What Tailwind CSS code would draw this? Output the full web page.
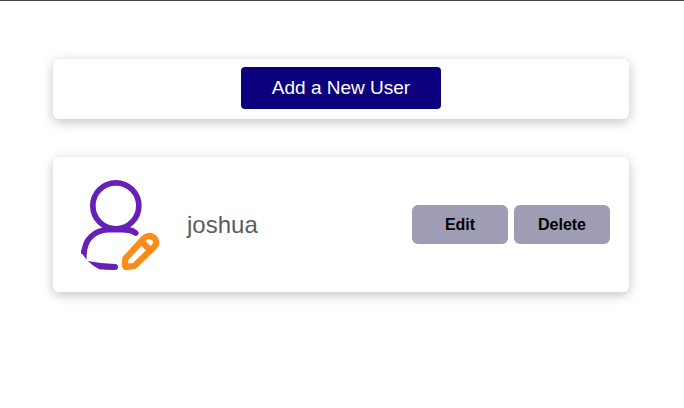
<!DOCTYPE html>
<html lang="en">
<head>
<meta charset="utf-8">
<meta name="viewport" content="width=device-width, initial-scale=1">
<title>Users</title>
<script src="https://cdn.jsdelivr.net/npm/@tailwindcss/browser@4"></script>
</head>
<body class="min-h-screen border-t border-[#444444] bg-white font-['Liberation_Sans',Arial,sans-serif]">
<main class="flex flex-col gap-[38px] pt-[58px] pr-[55px] pb-8 pl-[53px]">
  <section class="flex justify-center rounded-md bg-white pt-2 pb-2.5 shadow-[0_3px_12px_rgba(0,0,0,0.24)]">
    <button type="button" class="h-[42px] w-[200px] rounded bg-[#0b007e] text-[19px] text-white">Add a New User</button>
  </section>
  <article class="flex items-center rounded-md bg-white py-[22px] pr-[19px] pl-[27px] shadow-[0_3px_12px_rgba(0,0,0,0.24)]">
    <svg class="h-[91px] w-20 shrink-0" viewBox="30 27 240 273" fill="none" stroke-linecap="round" stroke-linejoin="round" aria-hidden="true">
      <g stroke="#6620b8" stroke-width="17">
        <circle cx="137.500" cy="107.500" r="69"/>
        <path d="M190 184Q180 179 165 179H114C74 181 43 208 42 252" stroke-linecap="butt"/>
        <path d="M197 189Q185 180 165 179"/>
      </g>
      <path fill="#6620b8" d="M33 247L50 269V247L41 238L34 240ZM53 273Q94 281 135 282A9 9 0 0 1 135 300Q108 300 88 298Q70 289 53 273Z"/>
      <g stroke="#fb8c1a" stroke-width="19">
        <path d="M166 266L221 206C239 186 270 208 254 229L196 285Q191 290 184 289L167 291Q165 290 165 286Z"/>
        <path d="M216 216L237 237"/>
      </g>
    </svg>
    <h2 class="ml-[27px] text-2xl text-[#5c5c5c]">joshua</h2>
    <div class="ml-auto flex gap-1.5">
      <button type="button" class="h-[39px] w-24 rounded-md bg-[#9e9db3] text-base font-bold text-black">Edit</button>
      <button type="button" class="h-[39px] w-24 rounded-md bg-[#9e9db3] text-base font-bold text-black">Delete</button>
    </div>
  </article>
</main>
</body>
</html>
